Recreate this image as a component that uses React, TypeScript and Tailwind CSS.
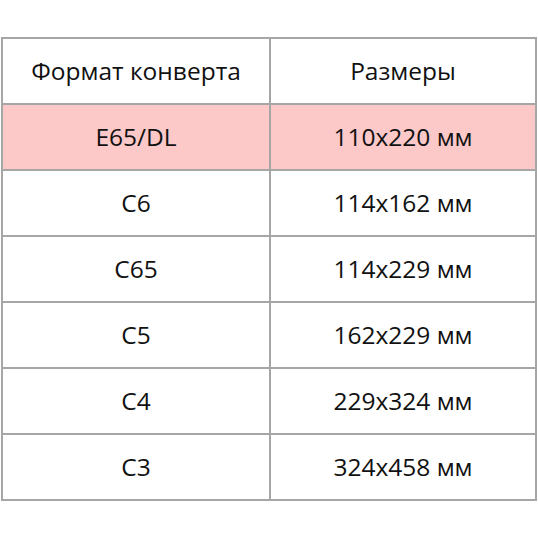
const rows = [
  ['E65/DL', '110x220 мм'],
  ['C6', '114x162 мм'],
  ['C65', '114x229 мм'],
  ['C5', '162x229 мм'],
  ['C4', '229x324 мм'],
  ['C3', '324x458 мм'],
]

export default function App() {
  return (
    <div className="w-[538px] h-[538px] bg-white pt-[37px] pl-[1px]" style={{ fontFamily: '"Open Sans", sans-serif' }}>
      <table className="w-[536px] border-collapse border-2 border-[#a6a6a6] text-[24.5px] text-[#111]">
        <tbody>
          <tr className="h-[66px]">
            <td className="w-[268px] border-2 border-[#a6a6a6] text-center">Формат конверта</td>
            <td className="border-2 border-[#a6a6a6] text-center">Размеры</td>
          </tr>
          {rows.map(([name, size], i) => (
            <tr key={name} className={i === 0 ? 'h-[66px] bg-[#fcc8c8]' : 'h-[66px]'}>
              <td className="border-2 border-[#a6a6a6] text-center">{name}</td>
              <td className="border-2 border-[#a6a6a6] text-center">{size}</td>
            </tr>
          ))}
        </tbody>
      </table>
    </div>
  )
}
